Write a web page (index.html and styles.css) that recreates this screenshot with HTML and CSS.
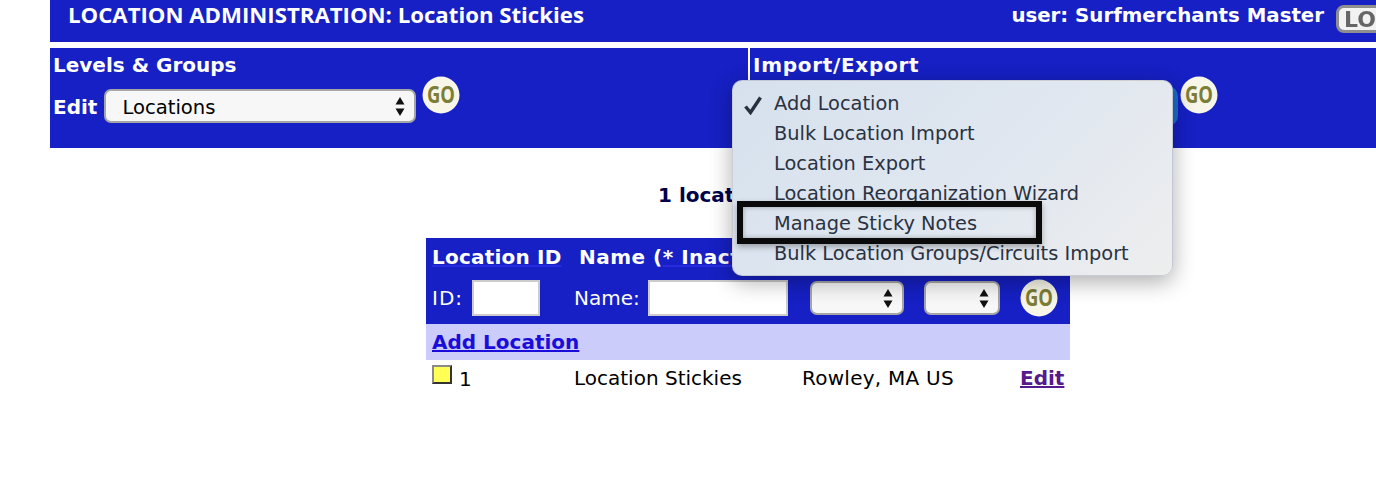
FILE: index.html
```html
<!DOCTYPE html>
<html lang="en">
<head>
<meta charset="utf-8">
<title>Location Stickies</title>
<link rel="stylesheet" href="styles.css">
</head>
<body>
<div class="page">
  <header class="topbar">
    <h1 class="title">LOCATION ADMINISTRATION: Location Stickies</h1>
    <div class="user">
      <span>user: Surfmerchants Master</span>
      <span class="logout">LOGOUT</span>
    </div>
  </header>
  <section class="toolbar">
    <div class="panel panel-left">
      <h2 class="panel-title">Levels &amp; Groups</h2>
      <div class="panel-row">
        <label class="panel-label" for="lvl">Edit</label>
        <select id="lvl" class="select select-levels"><option>Locations</option></select>
        <svg class="go go-panel" viewBox="0 0 38 38"><circle cx="19" cy="19" r="18.5" class="go-disc"/><text x="19" y="26.5" text-anchor="middle" class="go-text" textLength="28" lengthAdjust="spacingAndGlyphs">GO</text></svg>
      </div>
    </div>
    <div class="panel panel-right">
      <h2 class="panel-title title-wide">Import/Export</h2>
      <div class="panel-row">
        <select class="select select-import"><option>Add Location</option></select>
        <svg class="go go-panel go-right" viewBox="0 0 38 38"><circle cx="19" cy="19" r="18.5" class="go-disc"/><text x="19" y="26.5" text-anchor="middle" class="go-text" textLength="28" lengthAdjust="spacingAndGlyphs">GO</text></svg>
      </div>
    </div>
  </section>
  <p class="count">1 location found</p>
  <div class="table-wrap">
    <table class="grid">
      <colgroup>
        <col class="c1"><col class="c2"><col class="c3"><col class="c4"><col class="c5">
      </colgroup>
      <tr class="head">
        <th><a class="hlink">Location ID</a></th>
        <th class="th-name"><a>Name</a> (<a class="hlink">* Inactive</a>)</th>
        <th></th><th></th><th></th>
      </tr>
      <tr class="filters">
        <td><span class="f-label f-id">ID:</span><input class="input input-id" type="text"></td>
        <td><span class="f-label">Name:</span><input class="input input-name" type="text"></td>
        <td class="td-sel"><select class="select select-a"><option></option></select></td>
        <td class="td-sel2"><select class="select select-b"><option></option></select></td>
        <td class="td-go"><svg class="go" viewBox="0 0 38 38"><circle cx="19" cy="19" r="18.5" class="go-disc"/><text x="19" y="26.5" text-anchor="middle" class="go-text" textLength="28" lengthAdjust="spacingAndGlyphs">GO</text></svg></td>
      </tr>
      <tr class="add">
        <td colspan="5"><a class="add-link" href="#">Add Location</a></td>
      </tr>
      <tr class="row">
        <td><span class="sticky"></span>1</td>
        <td>Location Stickies</td>
        <td colspan="2" class="td-place">Rowley, MA US</td>
        <td class="td-edit"><a class="edit-link" href="#">Edit</a></td>
      </tr>
    </table>
  </div>
</div>
<div class="menu">
  <ul class="menu-list">
    <li class="menu-item checked"><svg class="check" viewBox="0 0 20 20"><path d="M2.5 11.5 L7.5 17.5 L17.5 2.5" fill="none" stroke="#28303f" stroke-width="3.4"/></svg>Add Location</li>
    <li class="menu-item">Bulk Location Import</li>
    <li class="menu-item">Location Export</li>
    <li class="menu-item">Location Reorganization Wizard</li>
    <li class="menu-item">Manage Sticky Notes</li>
    <li class="menu-item">Bulk Location Groups/Circuits Import</li>
  </ul>
</div>
<div class="callout"></div>
</body>
</html>
```
FILE: styles.css
```css
html, body { margin: 0; padding: 0; background: #fff; overflow: hidden; height: 498px; }
body { font-family: "DejaVu Sans", Verdana, sans-serif; font-size: 20px; color: #000; position: relative; }
.page { margin-left: 50px; }
.topbar { height: 42px; background: #1620c4; display: flex; align-items: flex-start; justify-content: space-between; padding-left: 18px; color: #fff; overflow: hidden; }
.title { margin: 0; font: 700 22.2px/30px "Open Sans", sans-serif; white-space: nowrap; }
.user { display: flex; align-items: flex-start; font-weight: 700; font-size: 19.75px; line-height: 32px; white-space: nowrap; gap: 12px; margin-right: -40px; }
.logout { margin-top: 5px; width: 80px; height: 28px; box-sizing: border-box; background: #f2f2f2; border: 3px solid #8f8f8f; border-radius: 8px; color: #666; font-size: 22px; font-weight: 700; line-height: 23px; padding-left: 5px; filter: blur(.7px); overflow: hidden; }
.toolbar { margin-top: 6px; height: 100px; background: #1620c4; display: flex; color: #fff; }
.panel { box-sizing: border-box; padding: 4px 0 0 3px; }
.panel-left { width: 700px; border-right: 2px solid #fff; }
.panel-right { flex: 1; }
.panel-title { margin: 0; font-size: 20px; font-weight: 700; line-height: 26px; }
.title-wide { letter-spacing: .7px; }
.panel-row { display: flex; align-items: flex-start; margin-top: 0; }
.panel-label { font-weight: 700; font-size: 20px; line-height: 30px; margin-top: 14px; margin-right: 7px; }
.go { width: 38px; height: 38px; display: block; overflow: visible; }
.go-panel { margin: -2px 0 0 6px; }
.go-right { margin-left: 5px; }
.go-disc { fill: #f7f6e8; }
.go-text { font: 700 23px "Open Sans", sans-serif; fill: #7c7d36; }
.select { appearance: none; -webkit-appearance: none; box-sizing: border-box; background: #f7f7f7 url("data:image/svg+xml,%3Csvg xmlns='http://www.w3.org/2000/svg' width='10' height='19'%3E%3Cpath d='M5 0l4.5 7.5h-9zM5 19l4.5-7.5h-9z' fill='%23111'/%3E%3C/svg%3E") no-repeat right 9px center; border: 2px solid #a6a6a6; border-radius: 7px; height: 34px; font: 19.6px "DejaVu Sans", sans-serif; color: #000; padding: 2px 26px 0 16px; display: block; }
.select-levels { width: 312px; margin-top: 11px; }
.select-import { width: 422px; box-shadow: 0 0 0 3px #1a6ccc; border-color: #1a6ccc; margin-top: 11px; }
.count { margin: 35px 0 0 608px; font-size: 20px; font-weight: 700; color: #00004a; line-height: 24px; white-space: nowrap; }
.table-wrap { margin: 31px 0 0 376px; width: 644px; }
.grid { border-collapse: collapse; table-layout: fixed; width: 644px; }
.c1 { width: 142px; } .c2 { width: 228px; } .c3 { width: 122px; } .c4 { width: 96px; } .c5 { width: 56px; }
.grid td, .grid th { padding: 0 0 0 6px; white-space: nowrap; overflow: hidden; text-align: left; }
.head { background: #1620c4; color: #fff; height: 38px; }
.head th { font-size: 20px; font-weight: 700; vertical-align: middle; letter-spacing: .2px; }
.th-name { padding-left: 11px !important; letter-spacing: .5px !important; }
.hlink { text-decoration: underline; text-decoration-color: #2a2ae0; }
.filters { background: #1620c4; color: #fff; height: 48px; }
.filters td { vertical-align: middle; padding-bottom: 4px; }
.f-label { margin-right: 8px; vertical-align: middle; }
.f-id { letter-spacing: 1px; margin-right: 9px; }
.input { box-sizing: border-box; height: 36px; background: #fff; border: 2px solid #ccc; padding: 0; vertical-align: middle; }
.input-id { width: 68px; }
.input-name { width: 140px; }
.td-sel { padding-left: 14px !important; }
.td-sel2 { padding-left: 6px !important; }
.td-go { padding-left: 6px !important; }
.select-a { width: 94px; }
.select-b { width: 76px; }
.add { background: #ccccfa; height: 36px; }
.add-link { color: #1a0ddc; font-weight: 700; font-size: 20px; }
.row { height: 37px; }
.row td { padding-bottom: 2px; }
.td-place { letter-spacing: .25px; }
.sticky { display: inline-block; box-sizing: border-box; width: 20px; height: 19px; background: #ffff55; border: 2px solid #8a8a8a; border-right-color: #333; border-bottom-color: #333; margin: 0 7px 0 0; vertical-align: 2px; }
.td-edit { text-align: right !important; padding-right: 6px !important; }
.edit-link { color: #551a8b; font-weight: 700; font-size: 20px; }
.menu { position: absolute; left: 732px; top: 80px; width: 441px; height: 196px; box-sizing: border-box; border-radius: 10px; background: linear-gradient(135deg, #d6e1ed 0%, #e0e7f0 55%, #eeeeee 100%); box-shadow: 0 6px 22px rgba(0,0,0,.32); border: 1px solid rgba(120,120,130,.25); }
.menu-list { list-style: none; margin: 0; padding: 8px 0 0 41px; }
.menu-item { position: relative; height: 30px; line-height: 30px; font-size: 19.36px; color: #2a3242; white-space: nowrap; }
.check { position: absolute; left: -31px; top: 6px; width: 20px; height: 20px; }
.callout { position: absolute; left: 737px; top: 201px; width: 305px; height: 43px; box-sizing: border-box; border: 6px solid #0a0a0a; box-shadow: 0 3px 6px rgba(0,0,0,.3), inset 0 0 5px rgba(0,0,0,.3); }
```
